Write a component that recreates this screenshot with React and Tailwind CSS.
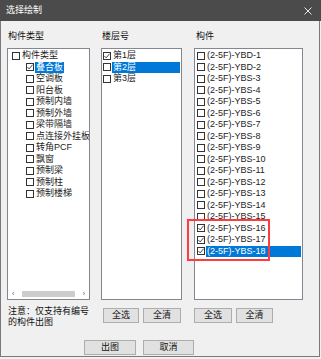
import React from 'react';

const font = { fontFamily: '"Liberation Sans", "Noto Sans CJK SC", sans-serif' };

function Box({ checked }) {
  return (
    <span className="w-[8px] h-[8px] border border-[#333] bg-white shrink-0 flex items-center justify-center">
      {checked && (
        <svg width="6" height="6" viewBox="0 0 6 6">
          <path d="M0.4 3 L2.2 4.9 L5.6 0.7" stroke="#333" fill="none" strokeWidth="0.9" />
        </svg>
      )}
    </span>
  );
}

function Row({ label, checked, selected, indent, full }) {
  return (
    <div className={`flex items-center h-[11.5px] gap-[1px] whitespace-nowrap ${indent}`}>
      <Box checked={checked} />
      <span
        className={`h-[11px] flex items-center px-[1px] ${full ? 'flex-1 mr-[1px]' : ''} ${
          selected ? 'bg-[#0078d7] text-white' : 'text-[#222]'
        }`}
      >
        {label}
      </span>
    </div>
  );
}

function Btn({ children, className = '' }) {
  return (
    <div className={`h-[15px] bg-[#e1e1e1] border border-[#adadad] flex items-center justify-center text-[9px] text-[#111] ${className}`}>
      {children}
    </div>
  );
}

const types = ['空调板', '阳台板', '预制内墙', '预制外墙', '梁带隔墙', '点连接外挂板', '转角PCF', '飘窗', '预制梁', '预制柱', '预制楼梯'];
const floors = ['第1层', '第2层', '第3层'];
const parts = [
  '(2-5F)-YBD-1', '(2-5F)-YBD-2',
  ...Array.from({ length: 16 }, (_, i) => `(2-5F)-YBS-${i + 3}`),
];

export default function App() {
  return (
    <div className="w-[321px] h-[359px] bg-[#f0f0f0] text-[9px] leading-none" style={font}>
      <div className="h-[21px] bg-[#4b4b4b] flex items-center justify-between pl-[6px] pr-[9px]">
        <span className="text-white text-[9px]">选择绘制</span>
        <svg width="8" height="8" viewBox="0 0 8 8">
          <path d="M0.5 0.5 L7.5 7.5 M7.5 0.5 L0.5 7.5" stroke="#e8e8e8" strokeWidth="1" />
        </svg>
      </div>

      <div className="w-[320px] h-[336px] border-x border-b border-[#7a7a7a] pl-[6px] pt-[11px]">
        <div className="flex h-[308px]">
          {/* 构件类型 */}
          <div className="w-[83px] flex flex-col">
            <div className="h-[10px] ml-[1px] text-[#111]">构件类型</div>
            <div className="mt-[6px] h-[252px] bg-white border border-[#828790] flex flex-col overflow-hidden">
              <div className="flex-1 pt-[1px]">
                <Row label="构件类型" indent="pl-[4px]" />
                <Row label="叠合板" checked selected indent="pl-[18px]" />
                {types.map(t => (
                  <Row key={t} label={t} indent="pl-[18px]" />
                ))}
              </div>
              <div className="h-[9px] mb-[1px] flex items-center px-[4px] gap-[3px] text-[#555] text-[7px]">
                <span>‹</span>
                <div className="ml-[5px] w-[53px] h-[6px] bg-[#cdcdcd]" />
                <span className="ml-auto">›</span>
              </div>
            </div>
            <div className="mt-[6px] ml-[1px] leading-[11px] text-[#111]">
              注意：仅支持有编号<br />的构件出图
            </div>
          </div>

          {/* 楼层号 */}
          <div className="w-[81px] ml-[11px] flex flex-col">
            <div className="h-[10px] ml-[1px] text-[#111]">楼层号</div>
            <div className="mt-[6px] h-[252px] bg-white border border-[#828790] pt-[1px]">
              {floors.map((f, i) => (
                <Row key={f} label={f} checked={i === 0} selected={i === 1} full indent="pl-[1px]" />
              ))}
            </div>
            <div className="mt-[8px] flex gap-[4px] pl-[2px]">
              <Btn className="w-[36px]">全选</Btn>
              <Btn className="w-[38px]">全清</Btn>
            </div>
          </div>

          {/* 构件 */}
          <div className="w-[109px] ml-[12px] flex flex-col">
            <div className="h-[10px] ml-[2px] text-[#111]">构件</div>
            <div className="relative mt-[6px] h-[252px]">
              <div className="h-full bg-white border border-[#828790] pt-[1px]">
                {parts.map((p, i) => (
                  <Row key={p} label={p} checked={i >= 15} selected={i === 17} full indent="pl-[2px]" />
                ))}
              </div>
              <div className="absolute left-[-7px] top-[171px] w-[83px] h-[42px] border-2 border-[#ff3b3b]" />
            </div>
            <div className="mt-[8px] flex gap-[4px]">
              <Btn className="w-[38px]">全选</Btn>
              <Btn className="w-[37px]">全清</Btn>
            </div>
          </div>
        </div>

        <div className="flex pl-[77px] gap-[7px]">
          <Btn className="w-[52px] border-[#0078d7]">出图</Btn>
          <Btn className="w-[51px]">取消</Btn>
        </div>
      </div>
    </div>
  );
}
